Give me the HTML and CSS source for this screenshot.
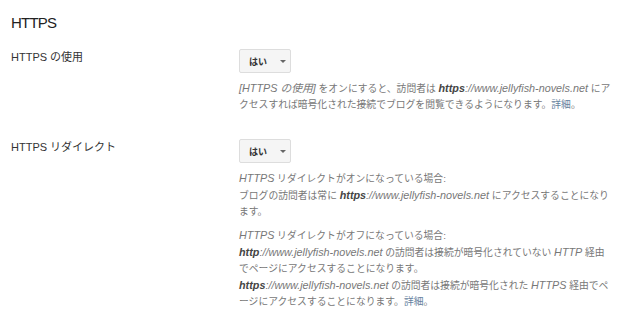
FILE: index.html
```html
<!doctype html>
<html lang="ja">
<head>
  <meta charset="UTF-8">
  <title>HTTPS</title>
  <link rel="stylesheet" href="styles.css">
</head>
<body>
  <div class="section">
    <h2 class="title">HTTPS</h2>

    <div class="row">
      <div class="label">HTTPS の使用</div>
      <div class="field">
        <div class="select"><span>はい</span><span class="caret"></span></div>
        <p class="desc"><i>[HTTPS の使用]</i> をオンにすると、訪問者は <b><i>https</i></b><i>://www.jellyfish-novels.net</i> にアクセスすれば暗号化された接続でブログを閲覧できるようになります。<a href="#">詳細</a>。</p>
      </div>
    </div>

    <div class="row row2">
      <div class="label">HTTPS リダイレクト</div>
      <div class="field">
        <div class="select"><span>はい</span><span class="caret"></span></div>
        <p class="desc"><i>HTTPS</i> リダイレクトがオンになっている場合:<br>ブログの訪問者は常に <b><i>https</i></b><i>://www.jellyfish-novels.net</i> にアクセスすることになります。</p>
        <p class="desc"><i>HTTPS</i> リダイレクトがオフになっている場合:<br><b><i>http</i></b><i>://www.jellyfish-novels.net</i> の訪問者は接続が暗号化されていない <i>HTTP</i> 経由でページにアクセスすることになります。<br><b><i>https</i></b><i>://www.jellyfish-novels.net</i> の訪問者は接続が暗号化された <i>HTTPS</i> 経由でページにアクセスすることになります。<a href="#">詳細</a>。</p>
      </div>
    </div>
  </div>
</body>
</html>
```

FILE: styles.css
```css
*{margin:0;
  padding:0;}
body{background:#fff;
     font-family:"Liberation Sans","Noto Sans CJK JP",sans-serif;
     color:#222;}
.section{padding:12px 0 0 11px;}
.title{font-size:15px;
       font-weight:normal;
       letter-spacing:-0.8px;
       line-height:21px;
       color:#222;}
.row{display:flex;
     margin-top:16px;}
.row2{margin-top:26px;}
.label{width:228px;
       flex:none;
       font-size:11px;
       line-height:16px;
       color:#333;}
.field{width:372px;}
.select{display:flex;
        align-items:center;
        box-sizing:border-box;
        width:52px;
        height:24px;
        padding-left:9px;
        border:1px solid #ddd;
        border-radius:2px;
        background:#f5f5f5;
        font-size:9px;
        font-weight:bold;
        color:#333;}
.caret{width:0;
       height:0;
       margin-left:13px;
       border-left:3px solid transparent;
       border-right:3px solid transparent;
       border-top:3px solid #666;}
.desc{margin-top:7px;
      font-size:9.8px;
      line-height:16px;
      color:#777;}
.desc i{font-size:10.8px;}
.desc b{color:#444;}
.desc a{color:#66819e;
        text-decoration:none;}
```
